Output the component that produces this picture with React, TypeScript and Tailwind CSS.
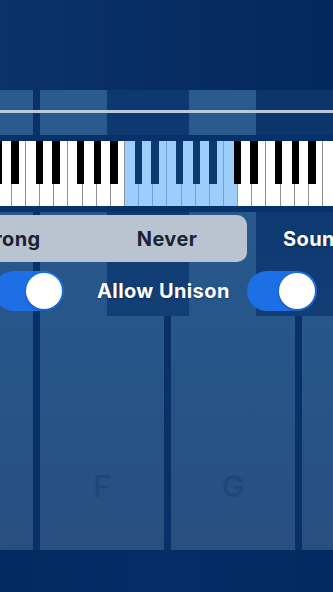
import React from "react";

const WHITE_W = 99 / 7;
const BLACK_LEFTS = [9.9, 26.2, 50.7, 67.6, 84.2];

function Octave({ highlight, highlightFirstOnly }: { highlight?: boolean; highlightFirstOnly?: boolean }) {
  return (
    <div className="relative flex h-full w-[99px] shrink-0">
      {Array.from({ length: 7 }).map((_, i) => {
        const hl = highlight || (highlightFirstOnly && i === 0);
        return (
          <div
            key={i}
            style={{ width: WHITE_W }}
            className={
              hl
                ? "h-full shrink-0 border-r border-[#6fa3d8] bg-[#9ccdfb]"
                : "h-full shrink-0 border-r border-[#8e939b] bg-white"
            }
          />
        );
      })}
      {BLACK_LEFTS.map((l, i) => (
        <div
          key={i}
          style={{ left: l }}
          className={
            highlight
              ? "absolute top-0 h-[43px] w-[7.4px] bg-[#0b3a6f]"
              : "absolute top-0 h-[43px] w-[7.4px] bg-black"
          }
        />
      ))}
    </div>
  );
}

function Toggle() {
  return (
    <div className="flex h-[40px] w-[70px] shrink-0 items-center justify-end rounded-full bg-[#1c6fe4] p-[2px]">
      <div className="h-[36px] w-[36px] rounded-full bg-white shadow-[0_1px_3px_rgba(0,0,0,0.25)]" />
    </div>
  );
}

function BigKey({ letter }: { letter?: string }) {
  return (
    <div className="flex h-full w-[124px] shrink-0 flex-col items-center justify-end bg-gradient-to-b from-[#2b5a8f] via-[#27568a] to-[#284f80] pb-[49px]">
      <span className="text-[30px] font-semibold leading-none text-[#1f4879]">{letter}</span>
    </div>
  );
}

export default function App() {
  return (
    <div
      className="relative h-[592px] w-[333px] overflow-hidden bg-gradient-to-r from-[#0b326a] to-[#03285c]"
      style={{ fontFamily: "Inter, 'Noto Sans', sans-serif" }}
    >
      {/* background big keyboard */}
      <div className="flex h-full flex-col">
        <div className="h-[90px] shrink-0" />
        <div className="relative flex h-[460px] shrink-0 gap-[7px] bg-[#0a3167]">
          <div className="ml-[-91px] flex h-full gap-[7px]">
            <BigKey />
            <BigKey letter="F" />
            <BigKey letter="G" />
            <BigKey />
          </div>
          <div className="absolute left-[107px] top-0 h-[226px] w-[82px] bg-gradient-to-b from-[#0c376f] to-[#133f77]" />
          <div className="absolute left-[256px] top-0 h-[226px] w-[90px] bg-gradient-to-b from-[#0b346b] to-[#123d75]" />
        </div>
        <div className="flex-1 bg-gradient-to-r from-[#032a60] via-[#052d66] to-[#032a60]" />
      </div>

      {/* foreground controls */}
      <div className="absolute inset-0 flex flex-col">
        <div className="mt-[110px] h-[3px] w-full bg-[#b9c8da]" />

        <div className="mt-[22px] h-[77px] w-full overflow-hidden bg-[#07316a] py-[6px]">
          <div className="ml-[-73px] flex h-[65px]">
            <Octave />
            <Octave />
            <Octave highlight />
            <Octave highlightFirstOnly />
            <Octave />
          </div>
        </div>

        <div className="mt-[3px] flex h-[47px] items-center whitespace-nowrap">
          <div className="ml-[-73px] flex h-full w-[320px] shrink-0 rounded-[10px] bg-[#bac4d1]">
            <div className="flex w-[160px] items-center justify-center text-[20px] font-bold tracking-[0.4px] text-[#1b2333]">
              Wrong
            </div>
            <div className="flex w-[160px] items-center justify-center text-[20px] font-bold tracking-[0.4px] text-[#1b2333]">
              Never
            </div>
          </div>
          <span className="ml-[36px] text-[20px] font-bold tracking-[0.4px] text-white [text-shadow:0_1px_2px_rgba(0,0,0,0.35)]">
            Sound
          </span>
        </div>

        <div className="mt-[9px] flex h-[40px] items-center whitespace-nowrap">
          <div className="ml-[-6px]">
            <Toggle />
          </div>
          <span className="ml-[33px] w-[135px] text-[20px] font-bold tracking-[0.4px] text-white [text-shadow:0_1px_2px_rgba(0,0,0,0.35)]">
            Allow Unison
          </span>
          <div className="ml-[15px]">
            <Toggle />
          </div>
        </div>
      </div>
    </div>
  );
}
